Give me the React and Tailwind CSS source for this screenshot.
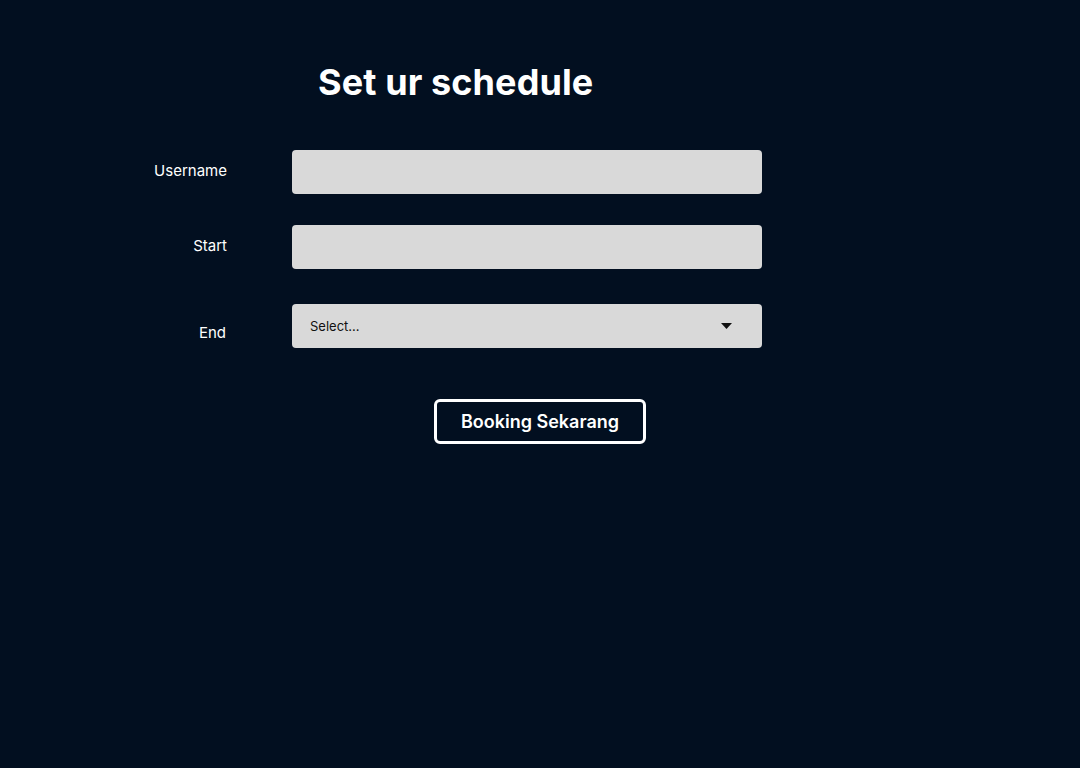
import React from "react";

export default function App() {
  return (
    <div className="min-h-[768px] w-full bg-[#020f20] text-white" style={{ fontFamily: "Inter, 'Noto Sans', sans-serif" }}>
      <div className="pt-[60px] pl-[318px]">
        <h1 className="text-[36px] font-bold leading-[44px] tracking-[0.1px]">Set ur schedule</h1>
      </div>
      <div className="mt-[46px] flex flex-col">
        <div className="flex items-center">
          <div className="w-[227px] text-right text-[15px] leading-5 mb-[2px]">Username</div>
          <div className="ml-[65px] h-[44px] w-[470px] rounded-[4px] bg-[#d9d9d9]"></div>
        </div>
        <div className="mt-[31px] flex items-center">
          <div className="w-[227px] text-right text-[15px] leading-5 mb-[2px]">Start</div>
          <div className="ml-[65px] h-[44px] w-[470px] rounded-[4px] bg-[#d9d9d9]"></div>
        </div>
        <div className="mt-[35px] flex items-center">
          <div className="w-[227px] pr-[1px] text-right text-[15px] leading-5 mt-[14px]">End</div>
          <div className="ml-[65px] flex h-[44px] w-[470px] items-center justify-between rounded-[4px] bg-[#d9d9d9] pl-[18px] pr-[30px]">
            <span className="text-[13px] text-[#111] leading-5">Select...</span>
            <svg width="11" height="6" viewBox="0 0 11 6"><path d="M0 0 L11 0 L5.5 6 Z" fill="#111" /></svg>
          </div>
        </div>
      </div>
      <div className="mt-[51px] pl-[434px]">
        <button className="h-[45px] w-[212px] rounded-[6px] border-[3px] border-white text-[18px] font-semibold text-white">
          Booking Sekarang
        </button>
      </div>
    </div>
  );
}
